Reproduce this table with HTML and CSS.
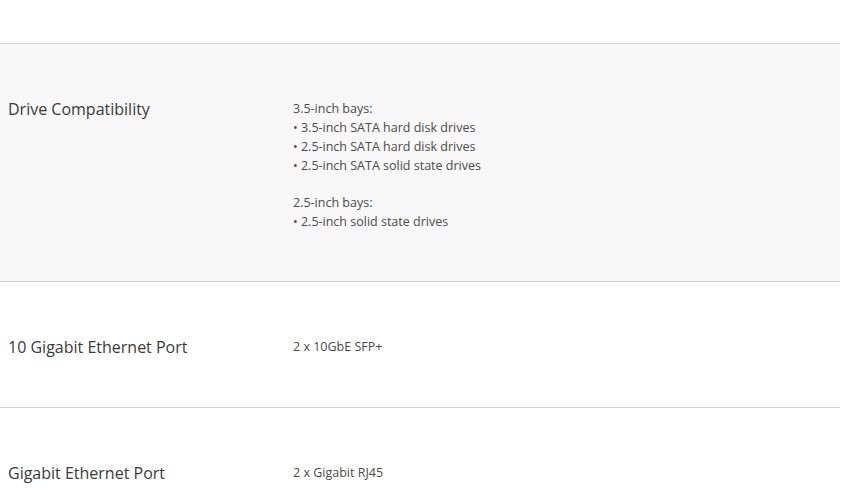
FILE: index.html
```html
<!DOCTYPE html>
<html lang="en">
<head>
    <meta charset="UTF-8">
    <meta name="viewport" content="width=device-width, initial-scale=1.0">
    <title>Specifications</title>
    <link rel="stylesheet" href="styles.css">
</head>
<body>
    <div class="specs">
        <div class="fila gris">
            <div class="etiqueta">Drive Compatibility</div>
            <div class="valor">
                <p>
                    3.5-inch bays:<br>
                    • 3.5-inch SATA hard disk drives<br>
                    • 2.5-inch SATA hard disk drives<br>
                    • 2.5-inch SATA solid state drives
                </p>
                <p>
                    2.5-inch bays:<br>
                    • 2.5-inch solid state drives
                </p>
            </div>
        </div>
        <div class="fila">
            <div class="etiqueta">10 Gigabit Ethernet Port</div>
            <div class="valor">2 x 10GbE SFP+</div>
        </div>
        <div class="fila">
            <div class="etiqueta">Gigabit Ethernet Port</div>
            <div class="valor">2 x Gigabit RJ45</div>
        </div>
    </div>
</body>
</html>
```

FILE: styles.css
```css
body {
    margin: 0;
    background-color: #fff;
    font-family: "Open Sans", "Noto Sans", sans-serif;
}

.specs {
    width: 840px;
    padding-top: 43px;
}

.fila {
    display: grid;
    grid-template-columns: 285px 1fr;
    padding: 55px 0 50px 8px;
    border-top: 1px solid #d2d2d2;
}

.fila.gris {
    background-color: #f8f8f8;
}

.etiqueta {
    font-size: 16px;
    line-height: 20px;
    color: #3a3a3a;
}

.valor {
    font-size: 12.5px;
    line-height: 19px;
    color: #4a4a4a;
}

.valor p {
    margin: 0;
}

.valor p + p {
    margin-top: 18px;
}
```
